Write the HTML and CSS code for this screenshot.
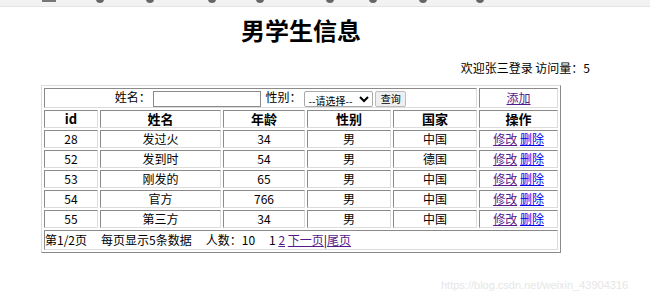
FILE: index.html
```html
<!DOCTYPE html>
<html lang="zh">
<head>
  <meta charset="UTF-8" />
  <title>男学生信息</title>
  <link rel="stylesheet" href="styles.css">
</head>
<body>
  <div class="tira">
    <span class="raya"></span>
    <span class="punto p1"></span>
    <span class="punto p2"></span>
    <span class="punto p3"></span>
    <span class="punto p4"></span>
    <span class="punto p5"></span>
    <span class="punto p6"></span>
    <span class="punto p7"></span>
    <span class="punto p8"></span>
  </div>
  <div class="pagina">
    <h1 class="titulo">男学生信息</h1>
    <div class="bienvenida">欢迎张三登录 访问量<span class="dos">：</span>5</div>
    <table class="tabla">
      <colgroup>
        <col class="c-id"><col class="c-nombre"><col class="c-edad"><col class="c-sexo"><col class="c-pais"><col class="c-op">
      </colgroup>
      <tr>
        <td colspan="5" class="buscar">
          姓名<span class="dos">：</span><input type="text" class="entrada">
          性别<span class="dos">：</span><select class="selector"><option>--请选择--</option></select>
          <button class="boton">查询</button>
        </td>
        <td><a href="#" class="visto">添加</a></td>
      </tr>
      <tr>
        <th>id</th><th>姓名</th><th>年龄</th><th>性别</th><th>国家</th><th>操作</th>
      </tr>
      <tr><td>28</td><td>发过火</td><td>34</td><td>男</td><td>中国</td><td><a href="#" class="visto">修改</a> <a href="#" class="nuevo">删除</a></td></tr>
      <tr><td>52</td><td>发到时</td><td>54</td><td>男</td><td>德国</td><td><a href="#" class="visto">修改</a> <a href="#" class="nuevo">删除</a></td></tr>
      <tr><td>53</td><td>刚发的</td><td>65</td><td>男</td><td>中国</td><td><a href="#" class="visto">修改</a> <a href="#" class="nuevo">删除</a></td></tr>
      <tr><td>54</td><td>官方</td><td>766</td><td>男</td><td>中国</td><td><a href="#" class="visto">修改</a> <a href="#" class="nuevo">删除</a></td></tr>
      <tr><td>55</td><td>第三方</td><td>34</td><td>男</td><td>中国</td><td><a href="#" class="visto">修改</a> <a href="#" class="nuevo">删除</a></td></tr>
      <tr>
        <td colspan="6" class="pie">第1/2页<span class="hueco"></span>每页显示5条数据<span class="hueco"></span>人数<span class="dos">：</span>10<span class="hueco"></span>1 <a href="#" class="visto">2</a> <a href="#" class="visto">下一页</a>|<a href="#" class="visto">尾页</a></td>
      </tr>
    </table>
  </div>
  <div class="marca">https://blog.csdn.net/weixin_43904316</div>
</body>
</html>
```

FILE: styles.css
```css
html, body {
  margin: 0;
  padding: 0;
  background: #fff;
  font-family: "Noto Sans CJK SC", "Noto Sans", sans-serif;
  font-size: 12px;
  color: #000;
}

.tira {
  height: 6px;
  background: #f2f2f2;
  border-bottom: 1px solid #e4e4e4;
  overflow: hidden;
  display: flex;
  align-items: flex-start;
}

.raya {
  width: 14px;
  height: 2px;
  background: #777;
  margin-left: 42px;
}

.punto {
  width: 8px;
  height: 8px;
  border-radius: 50%;
  background: #666;
  margin-top: -5px;
}

.p1 { margin-left: 40px; }
.p2 { margin-left: 42px; }
.p3 { margin-left: 54px; }
.p4 { margin-left: 40px; }
.p5 { margin-left: 62px; }
.p6 { margin-left: 35px; }
.p7 { margin-left: 42px; }
.p8 { margin-left: 49px; }

.pagina {
  width: 602px;
}

.titulo {
  margin: 8px 0 0;
  font-size: 24px;
  line-height: 30px;
  font-weight: bold;
  text-align: center;
}

.bienvenida {
  margin-top: 14px;
  padding-right: 12px;
  text-align: right;
  line-height: 17px;
}

/* los dos puntos centrados, como en YaHei */
.dos {
  display: inline-block;
  width: 1em;
  text-align: center;
}

.tabla {
  margin: 9px 0 0 41px;
  width: 520px;
  table-layout: fixed;
  border-collapse: separate;
  border-spacing: 2px;
  border: 1px solid;
  border-color: #dcdcdc #8a8a8a #8a8a8a #dcdcdc;
}

.c-id { width: 54px; }
.c-nombre { width: 121px; }
.c-edad { width: 82px; }
.c-sexo { width: 84px; }
.c-pais { width: 84px; }
.c-op { width: 79px; }

.tabla td, .tabla th {
  border: 1px solid;
  border-color: #8a8a8a #dcdcdc #dcdcdc #8a8a8a;
  padding: 0;
  height: 16px;
  line-height: 16px;
  font-size: 12px;
  text-align: center;
  white-space: nowrap;
}

.tabla th {
  font-weight: bold;
  font-size: 13px;
}

.tabla td.buscar {
  height: 18px;
}

.entrada {
  width: 104px;
  height: 14px;
  padding: 0 1px;
  border: 1px solid #8a8a8a;
  vertical-align: middle;
  margin: 0 2px 0 2px;
}

.selector {
  width: 69px;
  height: 16px;
  font-size: 10px;
  font-family: "Noto Sans CJK SC", sans-serif;
  padding: 0;
  border: 1px solid #a9a9a9;
  border-radius: 2px;
  background: #fff;
  vertical-align: middle;
  margin-left: 2px;
}

.boton {
  height: 16px;
  width: 31px;
  font-size: 10px;
  font-family: "Noto Sans CJK SC", sans-serif;
  padding: 0;
  border: 1px solid #bdbdbd;
  border-radius: 2px;
  background: #efefef;
  vertical-align: middle;
  line-height: 14px;
}

.tabla td.pie {
  text-align: left;
  height: 18px;
}

.hueco {
  display: inline-block;
  width: 14px;
}

.visto { color: #551a8b; }
.nuevo { color: #0000ee; }

.marca {
  position: absolute;
  left: 441px;
  top: 279px;
  color: #e6e6e6;
  font-family: "Liberation Sans", sans-serif;
  font-size: 11px;
}
```
